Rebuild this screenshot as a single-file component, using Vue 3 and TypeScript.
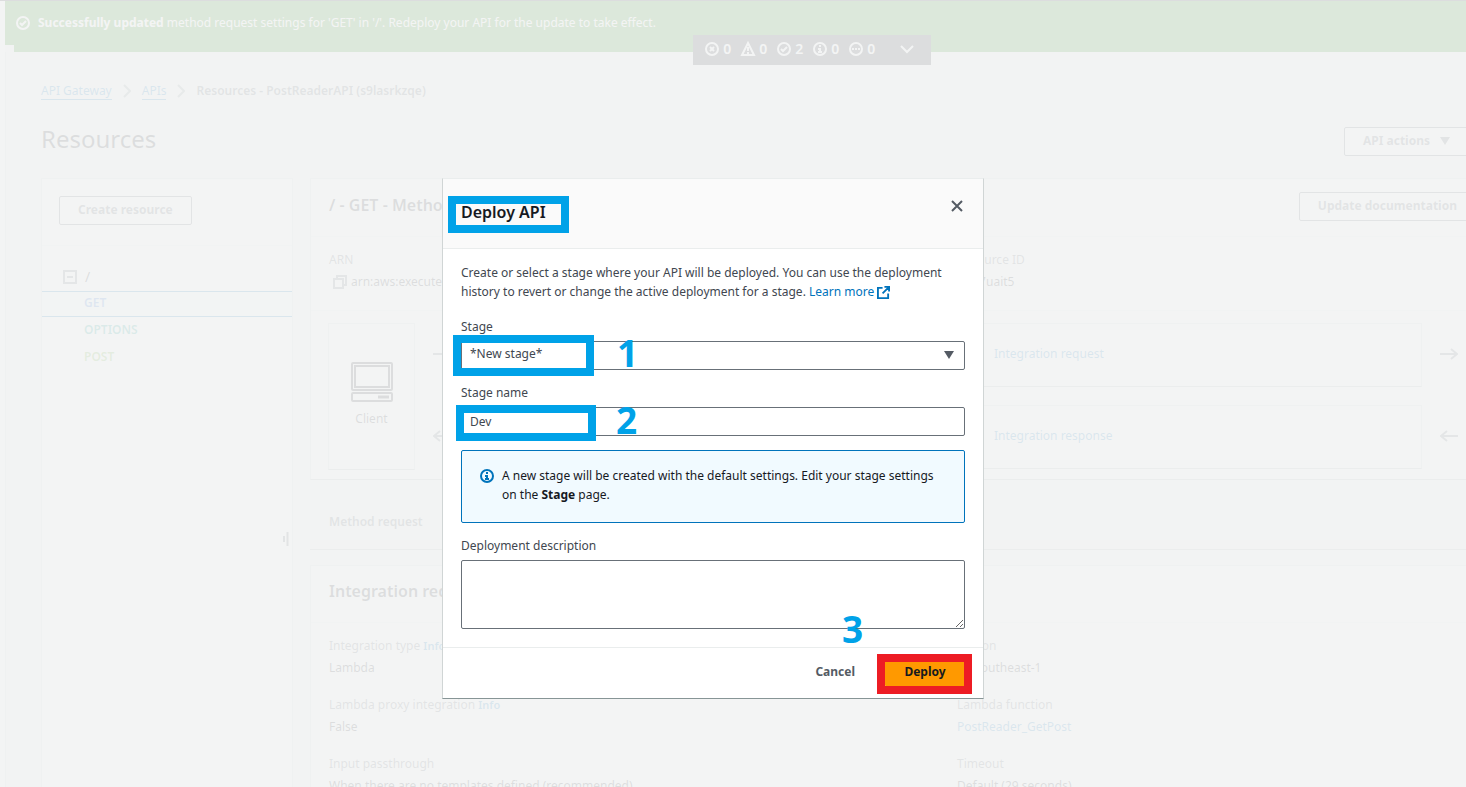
<script setup lang="ts">
import { ref } from 'vue'

const stage = ref('*New stage*')
const stageName = ref('Dev')
const description = ref('')

const counters = [
  { kind: 'error', label: 'Errors', count: 0 },
  { kind: 'warning', label: 'Warnings', count: 0 },
  { kind: 'success', label: 'Successes', count: 2 },
  { kind: 'info', label: 'Information', count: 0 },
  { kind: 'progress', label: 'In progress', count: 0 },
]

const methods = [
  { name: 'GET', tone: 'get' },
  { name: 'OPTIONS', tone: 'options' },
  { name: 'POST', tone: 'post' },
]

const settings = [
  { label: 'Integration type', info: true, value: 'Lambda', link: false },
  { label: 'Region', info: false, value: 'ap-southeast-1', link: false },
  { label: 'Lambda proxy integration', info: true, value: 'False', link: false },
  { label: 'Lambda function', info: false, value: 'PostReader_GetPost', link: true },
  { label: 'Input passthrough', info: false, value: 'When there are no templates defined (recommended)', link: false },
  { label: 'Timeout', info: false, value: 'Default (29 seconds)', link: false },
]
</script>

<template>
  <div class="app">
    <div class="page">
      <aside class="rail"></aside>
      <main class="main">
        <div class="flash">
          <svg class="icon" viewBox="0 0 16 16"><circle cx="8" cy="8" r="6" /><path d="M5 8l2 2 4-4" /></svg>
          <p><b>Successfully updated</b> method request settings for 'GET' in '/'. Redeploy your API for the update to take effect.</p>
        </div>
        <div class="flash-stack"></div>
        <button class="flash-bar" type="button" aria-label="Notifications">
          <span v-for="c in counters" :key="c.kind" class="counter" :title="c.label">
            <svg class="icon" viewBox="0 0 16 16">
              <path v-if="c.kind === 'warning'" d="M8 2L14 14H2zM8 6v4M8 11v2" />
              <circle v-else cx="8" cy="8" r="6" />
              <path v-if="c.kind === 'error'" d="M6 6l4 4M10 6l-4 4" />
              <path v-if="c.kind === 'success'" d="M5 8l2 2 4-4" />
              <path v-if="c.kind === 'info'" d="M8 4v2M6 8h2v3M6 11h4" />
              <path v-if="c.kind === 'progress'" d="M4 8h2M7 8h2M10 8h2" />
            </svg>
            {{ c.count }}
          </span>
          <svg class="icon expand" viewBox="0 0 16 16"><path d="M2 5l6 6 6-6" /></svg>
        </button>

        <div class="content">
          <nav class="crumbs" aria-label="Breadcrumbs">
            <a href="#">API Gateway</a>
            <svg viewBox="0 0 8 14"><path d="M1 1l6 6-6 6" /></svg>
            <a href="#">APIs</a>
            <svg viewBox="0 0 8 14"><path d="M1 1l6 6-6 6" /></svg>
            <span>Resources - PostReaderAPI (s9lasrkzqe)</span>
          </nav>

          <header class="title-row">
            <h1>Resources</h1>
            <button class="btn" type="button">API actions
              <svg class="caret" viewBox="0 0 10 8"><path d="M0 0h10L5 8z" /></svg>
            </button>
          </header>

          <div class="columns">
            <section class="panel tree">
              <div class="tree-head"><button class="btn" type="button">Create resource</button></div>
              <div class="root">
                <svg viewBox="0 0 14 14"><rect x="1" y="1" width="12" height="12" /><path d="M4 7h6" /></svg>
                <span>/</span>
              </div>
              <ul>
                <li v-for="m in methods" :key="m.name" :class="m.tone">{{ m.name }}</li>
              </ul>
              <svg class="handle" viewBox="0 0 6 14"><path d="M1 4v6M4.500 0v14" /></svg>
            </section>

            <div class="details">
              <section class="panel method">
                <div class="panel-head">
                  <h2>/ - GET - Method execution</h2>
                  <button class="btn" type="button">Update documentation</button>
                </div>
                <dl class="ids">
                  <div>
                    <dt>ARN</dt>
                    <dd class="arn">
                      <svg viewBox="0 0 14 14"><rect x="1" y="4" width="9" height="9" /><path d="M4 4V1h9v9h-3" /></svg>
                      arn:aws:execute-api
                    </dd>
                  </div>
                  <div>
                    <dt>Resource ID</dt>
                    <dd>sjk97uait5</dd>
                  </div>
                </dl>
                <div class="flow">
                  <div class="box client">
                    <svg viewBox="0 0 42 40"><rect x="1" y="1" width="40" height="27" rx="1" /><rect x="4" y="4" width="34" height="21" /><rect x="1" y="31" width="40" height="8" rx="1" /><path d="M27 35h11" class="thick" /></svg>
                    <span>Client</span>
                  </div>
                  <div class="arrows">
                    <svg viewBox="0 0 18 12"><path d="M0 6h17M11 1l6 5-6 5" /></svg>
                    <svg viewBox="0 0 18 12"><path d="M18 6H1M7 1L1 6l6 5" /></svg>
                  </div>
                  <div class="stack">
                    <div class="box"><a href="#">Integration request</a></div>
                    <div class="box"><a href="#">Integration response</a></div>
                  </div>
                  <div class="arrows">
                    <svg viewBox="0 0 18 12"><path d="M0 6h17M11 1l6 5-6 5" /></svg>
                    <svg viewBox="0 0 18 12"><path d="M18 6H1M7 1L1 6l6 5" /></svg>
                  </div>
                </div>
              </section>

              <div class="tabs"><button type="button">Method request</button></div>

              <section class="panel">
                <div class="panel-head second"><h2>Integration request settings</h2></div>
                <dl class="settings">
                  <div v-for="s in settings" :key="s.label">
                    <dt>{{ s.label }} <a v-if="s.info" href="#">Info</a></dt>
                    <dd><a v-if="s.link" href="#">{{ s.value }}</a><template v-else>{{ s.value }}</template></dd>
                  </div>
                </dl>
              </section>
            </div>
          </div>
        </div>
      </main>
    </div>

    <div class="overlay">
      <form class="modal" role="dialog" aria-labelledby="dialog-title" @submit.prevent>
        <header class="modal-head">
          <h2 id="dialog-title">Deploy API</h2>
          <button class="close" type="button" aria-label="Close">
            <svg viewBox="0 0 14 14"><path d="M2 2l10 10M12 2L2 12" /></svg>
          </button>
        </header>
        <div class="modal-body">
          <p class="intro">
            Create or select a stage where your API will be deployed. You can use the deployment history to revert or change the active deployment for a stage.
            <a href="#">Learn more
              <svg viewBox="0 0 14 14"><path d="M6 2H1v11h11V8M8 1h5v5M13 1L6 8" /></svg></a>
          </p>
          <div class="field">
            <label for="stage">Stage</label>
            <div class="select">
              <select id="stage" v-model="stage"><option>*New stage*</option></select>
              <svg class="caret" viewBox="0 0 10 8"><path d="M0 0h10L5 8z" /></svg>
            </div>
          </div>
          <div class="field">
            <label for="stage-name">Stage name</label>
            <input id="stage-name" v-model="stageName" type="text" />
          </div>
          <div class="alert">
            <svg class="icon" viewBox="0 0 16 16"><circle cx="8" cy="8" r="6" /><path d="M8 4v2M6 8h2v3M6 11h4" /></svg>
            <p>A new stage will be created with the default settings. Edit your stage settings on the <b>Stage</b> page.</p>
          </div>
          <div class="field">
            <label for="description">Deployment description</label>
            <textarea id="description" v-model="description"></textarea>
          </div>
        </div>
        <footer class="modal-foot">
          <button class="cancel" type="button">Cancel</button>
          <button class="deploy" type="submit">Deploy</button>
        </footer>

        <span class="mark mark-title"></span>
        <span class="mark mark-stage"></span>
        <span class="mark mark-name"></span>
        <span class="mark mark-deploy"></span>
        <span class="step step-1">1</span>
        <span class="step step-2">2</span>
        <span class="step step-3">3</span>
      </form>
    </div>
  </div>
</template>

<style>
body { overflow: hidden; }
</style>

<style scoped>
* { box-sizing: border-box; }
.app {
  position: relative;
  height: 100vh;
  overflow: hidden;
  background: #f2f3f3;
  color: #16191f;
  font: 12px/20px "Noto Sans", "Open Sans", sans-serif;
}
h1, h2, p, ul, dl, dd { margin: 0; padding: 0; }
button, input, select, textarea { font: inherit; color: inherit; }
a { color: #0073bb; text-decoration: none; }
svg { flex: none; fill: none; stroke: currentColor; stroke-width: 2; }
.icon { width: 16px; height: 16px; }
.caret { width: 10px; height: 8px; fill: currentColor; stroke: none; }

.page { display: flex; height: 100%; border-top: 1px solid #16191f; }
.rail { flex: none; width: 5px; background: #fff; }
.main { position: relative; flex: 1; min-width: 0; }
.flash {
  display: flex;
  align-items: center;
  gap: 7px;
  height: 44px;
  padding-left: 10px;
  background: #1d8102;
  color: #fff;
}
.flash-stack { height: 7px; margin-left: 9px; background: #1d8102; }
.flash-bar {
  position: absolute;
  top: 34px;
  left: 47.100%;
  display: flex;
  align-items: center;
  gap: 8px;
  width: 238px;
  height: 30px;
  padding: 0 11px 2px;
  border: 0;
  background: #16191f;
  color: #fff;
  font-size: 14px;
  font-weight: 600;
}
.counter { display: flex; align-items: center; gap: 3px; width: 28px; }
.expand { margin-left: 15px; }

.content { margin-right: -11px; padding: 29px 0 0 35px; border-left: 1px solid #d5dbdb; }
.crumbs { display: flex; align-items: center; gap: 11px; color: #545b64; font-weight: 600; }
.crumbs a { font-weight: 400; line-height: 16px; border-bottom: 1px solid #0073bb; }
.crumbs svg { width: 8px; height: 14px; color: #879596; }
.title-row { display: flex; justify-content: space-between; align-items: flex-start; margin-top: 24px; padding-right: 8px; }
h1 { font-size: 24px; font-weight: 400; line-height: 28px; }
.btn {
  display: flex;
  align-items: center;
  gap: 10px;
  height: 29px;
  padding: 0 18px 2px;
  border: 1px solid #545b64;
  border-radius: 2px;
  background: #fff;
  color: #545b64;
  font-weight: 700;
}
.title-row .btn { margin-top: 2px; }
.columns { display: flex; gap: 17px; margin-top: 22px; }
.panel { background: #fff; border: 1px solid #d5dbdb; border-bottom-color: #aab7b8; }
.tree { position: relative; flex: none; width: 252px; height: 640px; }
.tree-head { display: flex; height: 67px; padding: 17px; border-bottom: 1px solid #eaeded; }
.root { display: flex; align-items: center; gap: 8px; padding: 21px 0 4px 21px; font-size: 14px; }
.root svg { width: 14px; height: 14px; color: #687078; }
ul { list-style: none; font-weight: 600; }
li { height: 27px; padding-left: 42px; line-height: 26px; }
.get { height: 26px; line-height: 22px; border-top: 1px solid #0073bb; border-bottom: 1px solid #0073bb; color: #2e73d8; background: #f1faff; }
.options { color: #0b9a8a; }
.post { color: #6aaf35; }
.handle { position: absolute; right: 3px; top: 353px; width: 6px; height: 14px; color: #545b64; }

.details { flex: 1; min-width: 0; }
.panel-head { display: flex; justify-content: space-between; height: 58px; padding: 13px 0 0 18px; border-bottom: 1px solid #eaeded; }
h2 { font-size: 16px; font-weight: 600; line-height: 26px; }
.ids, .settings { display: grid; grid-template-columns: 628px 1fr; padding-left: 18px; }
dt { color: #545b64; }
dt a { font-size: 11px; font-weight: 600; }
.ids { height: 74px; padding-top: 13px; border-bottom: 1px solid #eaeded; }
.ids dd { margin-top: 2px; }
.arn { display: flex; align-items: center; gap: 4px; padding-left: 4px; }
.arn svg { width: 14px; height: 14px; color: #687078; }
.flow { display: flex; padding: 12px 0 9px 17px; }
.box { background: #fff; border: 1px solid #d5dbdb; border-bottom-color: #aab7b8; }
.client { display: flex; flex-direction: column; align-items: center; gap: 7px; width: 87px; height: 147px; padding-top: 38px; color: #16191f; }
.client svg { width: 42px; height: 40px; }
.client .thick { stroke-width: 3; }
.arrows { display: flex; flex-direction: column; gap: 70px; width: 54px; padding: 25px 18px 0; color: #687078; }
.arrows svg { width: 18px; height: 12px; }
.stack { flex: 1; display: flex; flex-direction: column; gap: 18px; }
.stack .box { height: 64px; padding: 20px 0 0 524px; }
.tabs { height: 70px; padding: 32px 19px 0; border-bottom: 1px solid #aab7b8; }
.tabs button { padding: 0; border: 0; background: none; color: #545b64; font-weight: 600; }
.tabs + .panel { margin-top: 15px; height: 300px; }
.panel-head.second { height: 57px; padding-top: 12px; }
.settings { row-gap: 17px; padding-top: 13px; }
.settings dd { margin-top: 2px; }

.overlay {
  position: absolute;
  inset: 0;
  display: flex;
  align-items: flex-start;
  justify-content: center;
  padding: 178px 40px 0 0;
  background: rgba(242, 243, 243, 0.9);
}
.modal {
  position: relative;
  width: 542px;
  background: #fff;
  border: 1px solid #d0d5d5;
  border-top-color: #eaeded;
  border-bottom-color: #879596;
}
.modal-head {
  display: flex;
  justify-content: space-between;
  height: 70px;
  padding: 20px 19px 0 18px;
  background: #fafafa;
  border-bottom: 1px solid #eaeded;
}
.close { width: 14px; height: 14px; padding: 0; border: 0; background: none; color: #545b64; }
.close svg { display: block; width: 14px; height: 14px; }
.modal-body { padding: 14px 18px 18px; }
.intro { margin-bottom: 16px; line-height: 19px; color: #414750; }
.intro svg { width: 13px; height: 13px; vertical-align: -3px; }
.field { display: flex; flex-direction: column; gap: 4px; margin-top: 13px; color: #414750; }
.select { position: relative; display: flex; }
.select .caret { position: absolute; right: 11px; top: 10px; color: #545b64; }
select, input, textarea {
  width: 100%;
  height: 29px;
  padding: 0 8px 3px;
  border: 1px solid #687078;
  border-radius: 2px;
  background: #fff;
  outline: 0;
}
select { appearance: none; }
input { padding-bottom: 1px; }
textarea { display: block; height: 69px; resize: vertical; }
.alert {
  display: flex;
  gap: 7px;
  height: 73px;
  margin-top: 14px;
  padding: 15px 17px;
  border: 1px solid #0073bb;
  border-radius: 2px;
  background: #f1faff;
  line-height: 19px;
}
.alert .icon { margin-top: 2px; color: #0073bb; }
.modal-foot {
  display: flex;
  justify-content: flex-end;
  gap: 12px;
  height: 51px;
  padding: 10px 18px;
  border-top: 1px solid #eaeded;
}
.modal-foot button { height: 29px; padding: 0 18px 1px; border: 0; border-radius: 2px; background: none; color: #545b64; font-weight: 700; }
.modal-foot .deploy { min-width: 80px; background: #ff9900; color: #16191f; }

.mark { position: absolute; border: 8px solid #00a2e8; pointer-events: none; }
.mark-title { left: 5px; top: 17px; width: 121px; height: 37px; }
.mark-stage { left: 10px; top: 156px; width: 141px; height: 41px; }
.mark-name { left: 13px; top: 226px; width: 140px; height: 36px; }
.mark-deploy { right: 11px; bottom: 4px; width: 95px; height: 40px; border-color: #ed1c24; }
.step { position: absolute; color: #00a2e8; font-size: 37px; font-weight: 700; line-height: 40px; pointer-events: none; }
.step-1 { left: 174px; top: 154px; }
.step-2 { left: 173px; top: 221px; }
.step-3 { left: 399px; top: 430px; }
</style>
